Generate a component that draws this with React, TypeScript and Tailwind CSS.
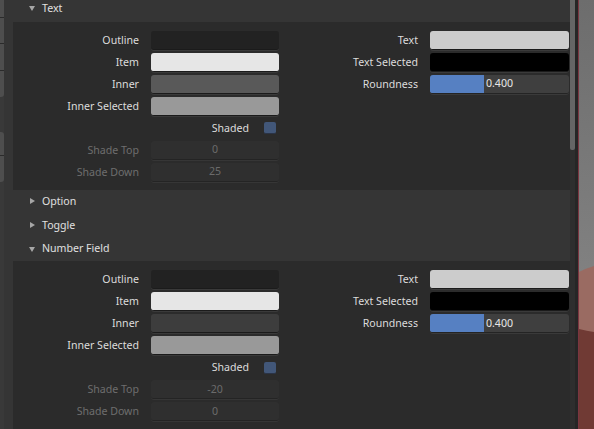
import React from "react";

type Row =
  | { kind: "color"; label: string; color: string }
  | { kind: "check"; label: string }
  | { kind: "num"; label: string; value: string }
  | { kind: "slider"; label: string; value: string; fill: number };

const textLeft: Row[] = [
  { kind: "color", label: "Outline", color: "bg-[#222222]" },
  { kind: "color", label: "Item", color: "bg-[#e6e6e6]" },
  { kind: "color", label: "Inner", color: "bg-[#595959]" },
  { kind: "color", label: "Inner Selected", color: "bg-[#999999]" },
  { kind: "check", label: "Shaded" },
  { kind: "num", label: "Shade Top", value: "0" },
  { kind: "num", label: "Shade Down", value: "25" },
];

const numberLeft: Row[] = [
  { kind: "color", label: "Outline", color: "bg-[#222222]" },
  { kind: "color", label: "Item", color: "bg-[#e6e6e6]" },
  { kind: "color", label: "Inner", color: "bg-[#3d3d3d]" },
  { kind: "color", label: "Inner Selected", color: "bg-[#999999]" },
  { kind: "check", label: "Shaded" },
  { kind: "num", label: "Shade Top", value: "-20" },
  { kind: "num", label: "Shade Down", value: "0" },
];

const rightRows: Row[] = [
  { kind: "color", label: "Text", color: "bg-[#cccccc]" },
  { kind: "color", label: "Text Selected", color: "bg-[#000000]" },
  { kind: "slider", label: "Roundness", value: "0.400", fill: 0.39 },
];

function Field({ row }: { row: Row }) {
  if (row.kind === "color") {
    return (
      <div className={`h-[19px] flex-1 rounded-[3px] border-b border-[#1b1b1b] shadow-[0_1px_0_#3a3a3a] ${row.color}`} />
    );
  }
  if (row.kind === "num") {
    return (
      <div className="h-[19px] flex-1 rounded-[3px] bg-[#2f2f2f] border-b border-[#242424] shadow-[0_1px_0_#363636] flex items-center justify-center text-[#6b6b6b]">
        {row.value}
      </div>
    );
  }
  if (row.kind === "slider") {
    return (
      <div className="relative h-[19px] flex-1 rounded-[3px] bg-[#3f3f3f] border-b border-[#242424] shadow-[0_1px_0_#3a3a3a] overflow-hidden flex items-center justify-center text-[#e6e6e6]">
        <div className="absolute left-0 top-0 bottom-0 bg-[#5680c2]" style={{ width: `${row.fill * 100}%` }} />
        <span className="relative">{row.value}</span>
      </div>
    );
  }
  return null;
}

function PropRow({ row, labelW, dim }: { row: Row; labelW: string; dim?: boolean }) {
  if (row.kind === "check") {
    return (
      <div className="h-[19px] flex items-center">
        <div className={`${labelW} shrink-0`} />
        <div className="ml-[12px] flex-1 flex items-center justify-end gap-[15px] pr-[3px] text-[#dcdcdc]">
          <span>{row.label}</span>
          <div className="w-[12px] h-[12px] rounded-[2px] bg-[#425779] border-b border-[#2a3346]" />
        </div>
      </div>
    );
  }
  return (
    <div className="h-[19px] flex items-center">
      <div className={`${labelW} shrink-0 text-right ${dim ? "text-[#6e6e6e]" : "text-[#dcdcdc]"}`}>{row.label}</div>
      <div className="ml-[12px] flex-1 flex">
        <Field row={row} />
      </div>
    </div>
  );
}

function SubPanel({ left }: { left: Row[] }) {
  return (
    <div className="ml-[9px] bg-[#2b2b2b] pt-[9px] pb-[8px] flex">
      <div className="w-[278px] pr-[12px] flex flex-col gap-[3px]">
        {left.map((r) => (
          <PropRow key={r.label} row={r} labelW="w-[126px]" dim={r.kind === "num"} />
        ))}
      </div>
      <div className="flex-1 pr-[1px] flex flex-col gap-[3px]">
        {rightRows.map((r) => (
          <PropRow key={r.label} row={r} labelW="w-[127px]" />
        ))}
      </div>
    </div>
  );
}

function Header({ title, open, size }: { title: string; open?: boolean; size: string }) {
  return (
    <div className={`${size} flex items-center pl-[24px] text-[#e0e0e0]`}>
      <svg width="9" height="10" viewBox="0 0 9 10" className="mr-[5px]">
        {open ? (
          <polygon points="1,3 7,3 4,8" fill="#a6a6a6" />
        ) : (
          <polygon points="2,2 7,5 2,8" fill="#a6a6a6" />
        )}
      </svg>
      <span>{title}</span>
    </div>
  );
}

function TabStrip() {
  return (
    <div className="w-[4px] shrink-0 bg-[#393939] flex flex-col">
      <div className="h-[18px] bg-[#4e4e4e] border-b border-[#2b2b2b]" />
      <div className="h-[26px] bg-[#4e4e4e] border-b border-[#2b2b2b]" />
      <div className="h-[27px] bg-[#4e4e4e] border-b border-[#2b2b2b]" />
      <div className="h-[26px] bg-[#4e4e4e] rounded-br-[3px]" />
      <div className="h-[35px]" />
      <div className="h-[24px] bg-[#4e4e4e] rounded-tr-[3px] border-b border-[#2b2b2b]" />
      <div className="h-[26px] bg-[#4e4e4e] rounded-br-[3px]" />
    </div>
  );
}

function Viewport() {
  return (
    <div className="w-[15px] shrink-0 h-full">
      <svg width="15" height="429" viewBox="0 0 15 429" preserveAspectRatio="none">
        <defs>
          <linearGradient id="sky" x1="0" y1="0" x2="0" y2="1">
            <stop offset="0" stopColor="#6d6d6d" />
            <stop offset="1" stopColor="#8c8c8c" />
          </linearGradient>
        </defs>
        <rect x="0" y="0" width="15" height="429" fill="url(#sky)" />
        <path d="M0,272 Q8,268 15,266 L15,429 L0,429 Z" fill="#9a6b62" />
        <path d="M0,329 Q8,331 15,332 L15,429 L0,429 Z" fill="#703a34" />
      </svg>
    </div>
  );
}

export default function App() {
  return (
    <div
      className="w-[594px] h-[429px] overflow-hidden flex bg-[#353535] text-[10.6px] leading-none"
      style={{ fontFamily: '"Noto Sans", "DejaVu Sans", sans-serif' }}
    >
      <TabStrip />
      <div className="flex-1 flex flex-col">
        <Header title="Text" open size="h-[22px] pb-[5px]" />
        <SubPanel left={textLeft} />
        <Header title="Option" size="h-[24px] pb-[1px]" />
        <Header title="Toggle" size="h-[24px]" />
        <Header title="Number Field" open size="h-[25px]" />
        <SubPanel left={numberLeft} />
      </div>
      {/* scrollbar */}
      <div className="w-[5px] shrink-0 bg-[#2e2e2e] flex flex-col">
        <div className="h-[150px] bg-[#656565] rounded-b-[2px]" />
      </div>
      <div className="w-[3px] shrink-0 bg-[#262626]" />
      <div className="w-[1px] shrink-0 bg-[#7a3540]" />
      <Viewport />
    </div>
  );
}
